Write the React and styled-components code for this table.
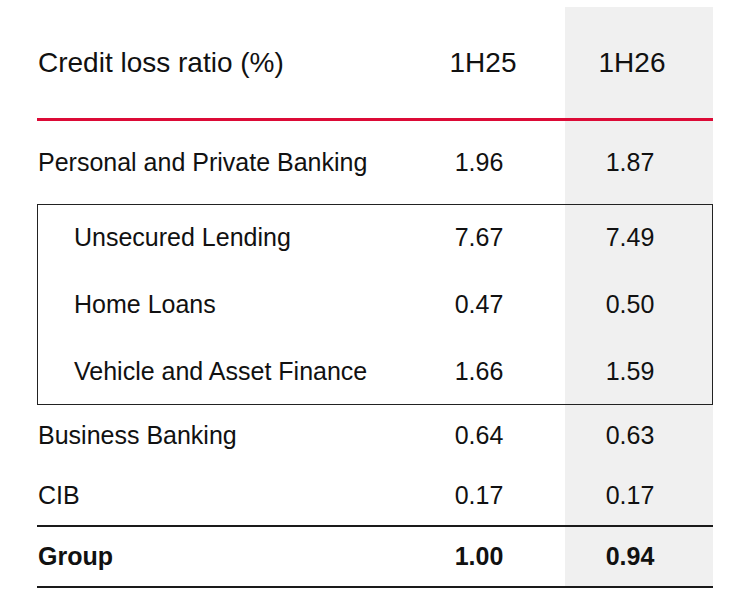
import styled, { createGlobalStyle } from "styled-components";

const GlobalStyle = createGlobalStyle`
  body {
    margin: 0;
    background: #ffffff;
    font-family: "Liberation Sans", Arial, sans-serif;
    color: #111111;
  }
`;

const Table = styled.div`
  width: 676px;
  margin: 7px 0 0 37px;
`;

const Row = styled.div`
  display: grid;
  grid-template-columns: 1fr 148px 148px;
  height: ${(p) => p.$height}px;
  font-size: ${(p) => (p.$head ? 28 : 25)}px;
  font-weight: ${(p) => (p.$bold ? 700 : 400)};
`;

const Label = styled.div`
  display: flex;
  align-items: center;
  padding-left: ${(p) => (p.$indent ? 37 : 1)}px;
  white-space: nowrap;
`;

const Value = styled.div`
  display: flex;
  align-items: center;
  justify-content: center;
  padding-right: ${(p) => p.$pad ?? 16}px;
  background: ${(p) => (p.$shade ? "#f0f0f0" : "transparent")};
`;

const Rule = styled.div`
  height: ${(p) => p.$thick}px;
  background: ${(p) => p.$color};
`;

const Group = styled.div`
  outline: 1.5px solid #222222;
  outline-offset: -1px;
`;

const rows = [
  { label: "Personal and Private Banking", a: "1.96", b: "1.87", h: 83 },
];

const sub = [
  { label: "Unsecured Lending", a: "7.67", b: "7.49" },
  { label: "Home Loans", a: "0.47", b: "0.50" },
  { label: "Vehicle and Asset Finance", a: "1.66", b: "1.59" },
];

const lower = [
  { label: "Business Banking", a: "0.64", b: "0.63", h: 61 },
  { label: "CIB", a: "0.17", b: "0.17", h: 59 },
];

function DataRow({ label, a, b, height, indent, bold }) {
  return (
    <Row $height={height} $bold={bold}>
      <Label $indent={indent}>{label}</Label>
      <Value $pad={24}>{a}</Value>
      <Value $shade $pad={18}>{b}</Value>
    </Row>
  );
}

export default function App() {
  return (
    <>
      <GlobalStyle />
      <Table>
        <Row $height={111} $head>
          <Label>Credit loss ratio (%)</Label>
          <Value>1H25</Value>
          <Value $shade $pad={14}>1H26</Value>
        </Row>
        <Rule $thick={3} $color="#dc0a36" />
        {rows.map((r) => (
          <DataRow key={r.label} label={r.label} a={r.a} b={r.b} height={r.h} />
        ))}
        <Group>
          {sub.map((r) => (
            <DataRow key={r.label} label={r.label} a={r.a} b={r.b} height={67} indent />
          ))}
        </Group>
        {lower.map((r) => (
          <DataRow key={r.label} label={r.label} a={r.a} b={r.b} height={r.h} />
        ))}
        <Rule $thick={2} $color="#1a1a1a" />
        <DataRow label="Group" a="1.00" b="0.94" height={59} bold />
        <Rule $thick={2} $color="#1a1a1a" />
      </Table>
    </>
  );
}
